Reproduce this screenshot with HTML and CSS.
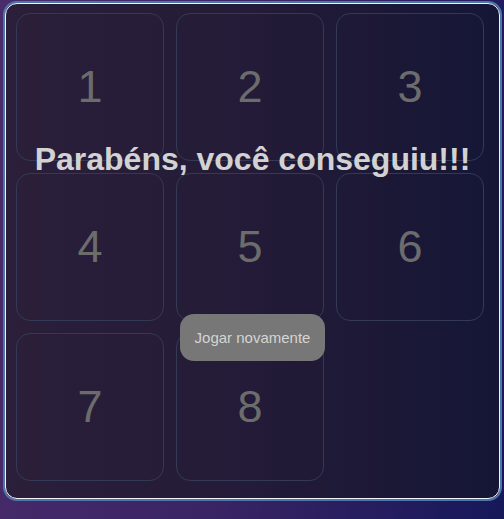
FILE: index.html
```html
<!DOCTYPE html>
<html lang="pt">
<head>
<meta charset="utf-8">
<link rel="stylesheet" href="styles.css">
</head>
<body>
<div class="board">
  <div class="grid">
    <div class="tile">1</div>
    <div class="tile">2</div>
    <div class="tile">3</div>
    <div class="tile">4</div>
    <div class="tile">5</div>
    <div class="tile">6</div>
    <div class="tile">7</div>
    <div class="tile">8</div>
    <div class="empty"></div>
  </div>
  <div class="overlay">
    <h1 class="title">Parabéns, você conseguiu!!!</h1>
    <button class="again">Jogar novamente</button>
  </div>
</div>
</body>
</html>
```
FILE: styles.css
```css
html, body {
  margin: 0;
  height: 100%;
}
body {
  background: linear-gradient(100deg, #4a2c6c 0%, #3a2464 50%, #16185a 100%);
  font-family: "Liberation Sans", Arial, sans-serif;
  padding-top: 3px;
  box-sizing: border-box;
}
.board {
  position: relative;
  width: 495px;
  height: 496px;
  margin-left: 5px;
  box-sizing: border-box;
  border: 1px solid #f2f4fa;
  border-radius: 12px;
  box-shadow: 0 0 0 2px #4d77aa;
  background: linear-gradient(90deg, #2b1f3a 0%, #231b37 50%, #151636 100%);
  padding: 9px 0 0 10px;
}
.grid {
  display: grid;
  grid-template-columns: repeat(3, 148px);
  grid-template-rows: repeat(3, 148px);
  gap: 12px;
}
.tile {
  box-sizing: border-box;
  border: 1px solid #343a55;
  border-radius: 14px;
  display: flex;
  align-items: center;
  justify-content: center;
  font-size: 45px;
  color: #6c6c6c;
}
.overlay {
  position: absolute;
  inset: 0;
  display: flex;
  flex-direction: column;
  align-items: center;
  justify-content: space-evenly;
}
.title {
  margin: 0;
  font-size: 32px;
  font-weight: bold;
  color: #d2d2d2;
  line-height: 37px;
}
.again {
  font-family: "Liberation Sans", Arial, sans-serif;
  font-size: 15px;
  color: #d4d4d4;
  background: #777777;
  border: none;
  border-radius: 14px;
  width: 145px;
  height: 47px;
  padding: 0;
}
```
